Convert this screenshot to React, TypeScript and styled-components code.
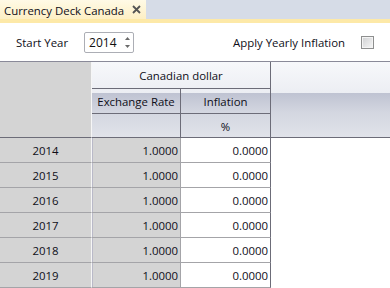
import React, { FC } from 'react';
import styled, { createGlobalStyle } from 'styled-components';

const GlobalStyle = createGlobalStyle`
  html, body {
    margin: 0;
    padding: 0;
    background: #ffffff;
  }
  body {
    font-family: "Open Sans", "Noto Sans", sans-serif;
    font-size: 11.4px;
    color: #0e0e18;
  }
`;

interface IYearRow {
  year: number;
  rate: number;
  inflation: number;
}

const rows: IYearRow[] = [2014, 2015, 2016, 2017, 2018, 2019].map(year => ({
  year,
  rate: 1,
  inflation: 0,
}));

const Page = styled.div`
  width: 390px;
  height: 288px;
  overflow: hidden;
  display: flex;
  flex-direction: column;
`;

const TabStrip = styled.div`
  height: 19px;
  background: #d6dce7;
  display: flex;
`;

const Tab = styled.div`
  width: 146px;
  box-sizing: border-box;
  padding: 0 5px 0 4px;
  display: flex;
  align-items: center;
  justify-content: space-between;
  background: linear-gradient(to bottom, #fffae6, #fdefc4);
`;

const TabTitle = styled.span`
  white-space: nowrap;
  line-height: 19px;
  padding-top: 2px;
`;

const TabAccent = styled.div`
  height: 4px;
  background: #fde9a8;
`;

const Toolbar = styled.div`
  height: 38px;
  box-sizing: border-box;
  display: flex;
  align-items: center;
  padding: 0 16px 0 16px;
`;

const Label = styled.span<{ gap: number }>`
  margin-right: ${props => props.gap}px;
  white-space: nowrap;
`;

const Spinner = styled.div`
  width: 50px;
  height: 21px;
  box-sizing: border-box;
  border: 1px solid #acaeb5;
  border-radius: 2px;
  display: flex;
  align-items: center;
  justify-content: space-between;
  padding: 0 3px 0 4px;
  margin-top: 1px;
`;

const SpinValue = styled.span`
  font-size: 12px;
  color: #101010;
`;

const SpinButtons = styled.div`
  display: flex;
  flex-direction: column;
  gap: 5px;
`;

const Spacer = styled.div`
  flex: 1;
`;

const CheckBox = styled.div`
  width: 13px;
  height: 13px;
  box-sizing: border-box;
  border: 1px solid #8e8f8f;
  box-shadow: inset 0 0 0 1px #f4f4f4;
  background: linear-gradient(135deg, #cfd0d2, #f7f7f7);
`;

const Grid = styled.div`
  flex: 1;
  border-top: 1px solid #8a8a99;
  display: grid;
  grid-template-columns: 92px 89px 90px 1fr;
  grid-template-rows: 27px 25px 24px;
  grid-auto-rows: 25px;
  background:
    linear-gradient(
      to bottom,
      #f7f8fb 0px,
      #eceef3 31px,
      #bfc3d2 31px,
      #d3d6e0 50px,
      #e1e3ea 76px,
      #ffffff 76px
    );
`;

const Corner = styled.div`
  grid-row: 1 / span 3;
  background: #d4d4d4;
  border-right: 1px solid #f6f6f6;
  border-bottom: 1px solid #6c6c78;
`;

const HeadCell = styled.div<{ span?: number; column?: number }>`
  grid-column: ${props => (props.column ? `${props.column}` : `span ${props.span || 1}`)};
  display: flex;
  align-items: center;
  justify-content: center;
  box-sizing: border-box;
  border-right: 1px solid #6c6c78;
  border-bottom: 1px solid #6c6c78;
  white-space: nowrap;
  padding-top: 1px;
`;

const HeadFill = styled.div`
  grid-column: 4;
  grid-row: 1 / span 3;
  border-bottom: 1px solid #6c6c78;
`;

const RowHeader = styled.div`
  background: #d4d4d4;
  border-right: 1px solid #f6f6f6;
  border-bottom: 1px solid #a4a4a8;
  display: flex;
  align-items: center;
  justify-content: center;
  padding-top: 1px;
`;

const ValueCell = styled.div<{ readOnly?: boolean }>`
  background: ${props => (props.readOnly ? '#d4d4d4' : '#ffffff')};
  box-shadow: ${props => (props.readOnly ? 'inset 1px 0 0 #b9b9c8' : 'none')};
  border-right: 1px solid ${props => (props.readOnly ? '#a4a4a8' : '#6c6c78')};
  border-bottom: 1px solid #a4a4a8;
  display: flex;
  align-items: center;
  justify-content: flex-end;
  padding: 1px 2px 0 0;
`;

const Blank = styled.div`
  background: #ffffff;
`;

const CloseIcon: FC = () => (
  <svg width="9" height="9" viewBox="0 0 9 9">
    <path d="M1 1 L8 8 M8 1 L1 8" stroke="#545454" strokeWidth="1.8" />
  </svg>
);

const Arrow: FC<{ up?: boolean }> = ({ up }) => (
  <svg width="5" height="3" viewBox="0 0 5 3">
    <path d={up ? 'M0 3 L2.5 0 L5 3 Z' : 'M0 0 L5 0 L2.5 3 Z'} fill="#6a6a6a" />
  </svg>
);

const App: FC = () => {
  return (
    <Page>
      <GlobalStyle />
      <TabStrip>
        <Tab>
          <TabTitle>Currency Deck Canada</TabTitle>
          <CloseIcon />
        </Tab>
      </TabStrip>
      <TabAccent />
      <Toolbar>
        <Label gap={16}>Start Year</Label>
        <Spinner>
          <SpinValue>2014</SpinValue>
          <SpinButtons>
            <Arrow up />
            <Arrow />
          </SpinButtons>
        </Spinner>
        <Spacer />
        <Label gap={16}>Apply Yearly Inflation</Label>
        <CheckBox />
      </Toolbar>
      <Grid>
        <Corner />
        <HeadCell span={2}>Canadian dollar</HeadCell>
        <HeadFill />
        <HeadCell>Exchange Rate</HeadCell>
        <HeadCell>Inflation</HeadCell>
        <HeadCell column={2} />
        <HeadCell>%</HeadCell>
        {rows.map(row => (
          <React.Fragment key={row.year}>
            <RowHeader>{row.year}</RowHeader>
            <ValueCell readOnly>{row.rate.toFixed(4)}</ValueCell>
            <ValueCell>{row.inflation.toFixed(4)}</ValueCell>
            <Blank />
          </React.Fragment>
        ))}
      </Grid>
    </Page>
  );
};

export default App;
